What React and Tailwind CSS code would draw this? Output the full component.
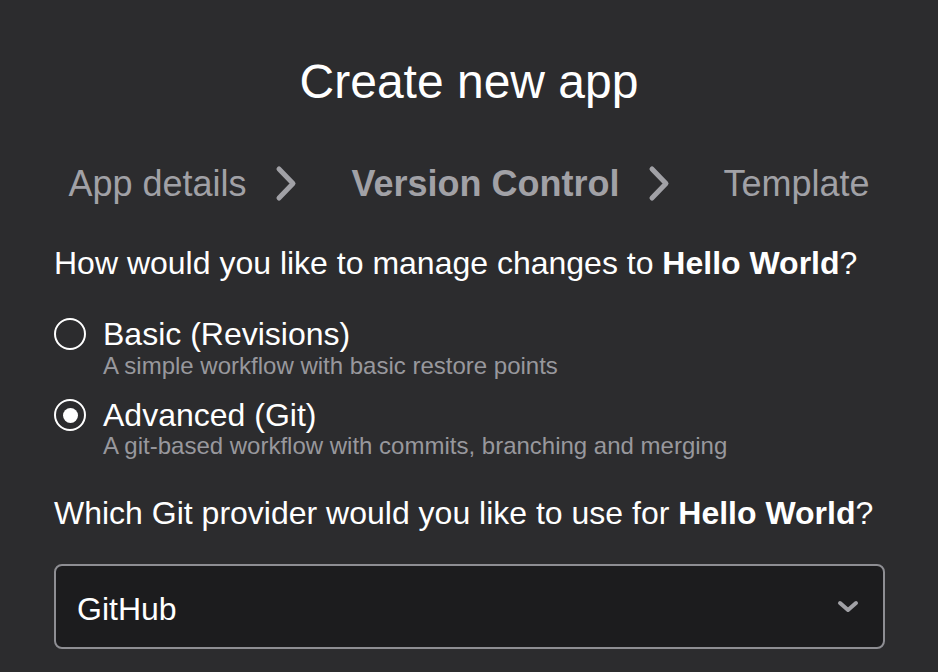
export default function App() {
  const Chevron = () => (
    <svg width="22" height="37" viewBox="0 0 22 37" className="shrink-0">
      <polyline points="4,4 18,18.5 4,33" fill="none" stroke="#a1a1a6" strokeWidth="5" strokeLinecap="round" strokeLinejoin="round" />
    </svg>
  );
  return (
    <div className="min-h-screen w-full bg-[#2c2c2e] px-[54px] pb-6 text-white" style={{ fontFamily: '"Liberation Sans", Arial, sans-serif' }}>
      <h1 className="pt-[58px] text-center text-[48px] leading-[48px] font-normal">Create new app</h1>

      <div className="mt-[59px] flex items-center justify-center text-[36px] leading-[36px] text-[#a1a1a6]">
        <span>App details</span>
        <span className="ml-[28px] mr-[55px]"><Chevron /></span>
        <span className="font-bold">Version Control</span>
        <span className="ml-[28px] mr-[54px]"><Chevron /></span>
        <span>Template</span>
      </div>

      <p className="mt-[45px] text-[32px] leading-[32px]">
        How would you like to manage changes to <span className="font-bold">Hello World</span>?
      </p>

      <div className="mt-[39px]">
        <div className="flex items-center gap-[17px] text-[32px] leading-[30px]">
          <span className="h-[32px] w-[32px] shrink-0 rounded-full border-2 border-white" />
          <span>Basic (Revisions)</span>
        </div>
        <div className="mt-[4px] pl-[49px] text-[24px] leading-[24px] text-[#98989d]">A simple workflow with basic restore points</div>

        <div className="mt-[21px] flex items-center gap-[17px] text-[32px] leading-[30px]">
          <span className="flex h-[32px] w-[32px] shrink-0 items-center justify-center rounded-full border-2 border-white">
            <span className="h-[15px] w-[15px] rounded-full bg-white" />
          </span>
          <span>Advanced (Git)</span>
        </div>
        <div className="mt-[3px] pl-[49px] text-[24px] leading-[24px] text-[#98989d]">A git-based workflow with commits, branching and merging</div>
      </div>

      <p className="mt-[39px] text-[32px] leading-[32px]">
        Which Git provider would you like to use for <span className="font-bold">Hello World</span>?
      </p>

      <div className="mt-[35px] flex h-[85px] w-[831px] items-center justify-between rounded-[8px] border-2 border-[#8e8e93] bg-[#1c1c1e] pl-[21px] pr-[24px] pt-[4px]">
        <span className="text-[32px] leading-[32px]">GitHub</span>
        <svg width="22" height="13" viewBox="0 0 22 13" className="-mt-[4px]">
          <polyline points="3,3 11,10 19,3" fill="none" stroke="#a1a1a6" strokeWidth="4" strokeLinecap="round" strokeLinejoin="round" />
        </svg>
      </div>
    </div>
  );
}
